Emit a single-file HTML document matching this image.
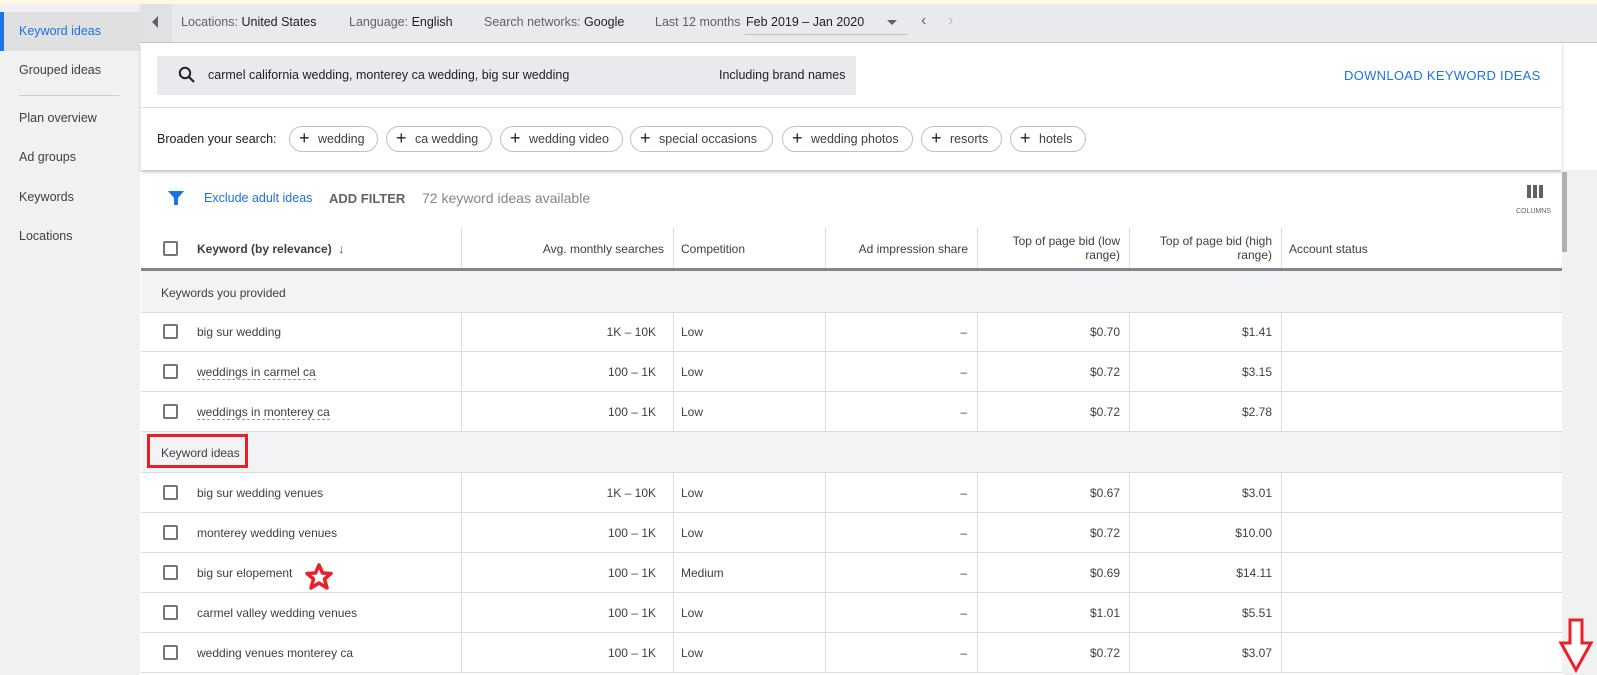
<!DOCTYPE html>
<html><head><meta charset="utf-8"><style>
*{box-sizing:border-box;margin:0;padding:0}
body{width:1597px;height:675px;overflow:hidden;background:#fff;font-family:"Liberation Sans",Arial,sans-serif;color:#3c4043;position:relative;font-size:12px}
.a{position:absolute}
.side{left:0;top:4px;width:140px;height:671px;background:#f1f1f1}
.side div{position:absolute;left:19px;font-size:12.5px;color:#3c4043}
.top{left:140px;top:4px;width:1457px;height:39px;background:#e8eaed;border-bottom:1px solid #c8c8c8}
.t{font-size:12.5px;color:#5f6368;top:11px}
.t b{font-weight:normal;color:#202124}
.chip{position:absolute;top:126px;height:26px;border:1px solid #bdc1c6;border-radius:13px;font-size:12.5px;color:#3c4043;line-height:24px;padding-left:28px}
.chip:before{content:"+";position:absolute;left:9px;top:-1px;font-size:18px;color:#202124}
.row{position:absolute;left:141px;width:1421px;height:40px;border-bottom:1px solid #dadce0;font-size:12px;color:#3c4043}
.row span{position:absolute;top:13px}
.cb{position:absolute;left:22px;top:12px;width:15px;height:15px;border:2px solid #757575;border-radius:2px}
.grp{background:#f1f3f4}
.vl{position:absolute;top:0;bottom:0;width:1px;background:#dadce0}
.r{text-align:right}
</style></head><body>
<div class="a" style="left:0;top:0;width:1597px;height:4px;background:#fdf8e4"></div>
<div class="a side">
<div style="left:0;top:8px;width:140px;height:39px;background:#e0e0e0;border-left:4px solid #1a73e8"></div>
<div style="top:20px;color:#1a73e8">Keyword ideas</div>
<div style="top:59px">Grouped ideas</div>
<div style="top:91px;width:100px;height:1px;background:#ccc"></div>
<div style="top:107px">Plan overview</div>
<div style="top:146px">Ad groups</div>
<div style="top:186px">Keywords</div>
<div style="top:225px">Locations</div>
</div>
<div class="a top">
<div class="a" style="left:0;top:0;width:32px;height:38px;background:#dfe1e5"></div>
<div class="a" style="left:12px;top:12px;width:0;height:0;border-top:6px solid transparent;border-bottom:6px solid transparent;border-right:6px solid #5f6368"></div>
<div class="a t" style="left:41px">Locations: <b>United States</b></div>
<div class="a t" style="left:209px">Language: <b>English</b></div>
<div class="a t" style="left:344px">Search networks: <b>Google</b></div>
<div class="a t" style="left:515px">Last 12 months</div>
<div class="a t" style="left:606px"><b>Feb 2019 – Jan 2020</b></div>
<div class="a" style="left:605px;top:30px;width:162px;height:1px;background:#c0c0c0"></div>
<div class="a" style="left:747px;top:16px;border-left:5px solid transparent;border-right:5px solid transparent;border-top:5px solid #5f6368"></div>
<div class="a" style="left:781px;top:8px;font-size:16px;color:#5f6368">‹</div>
<div class="a" style="left:808px;top:8px;font-size:16px;color:#bbb">›</div>
</div>
<div class="a" style="left:141px;top:43px;width:1421px;height:127px;background:#fff;box-shadow:0 2px 3px rgba(0,0,0,.25)"></div>
<div class="a" style="left:157px;top:56px;width:699px;height:39px;background:#e8eaed"></div>
<svg class="a" style="left:177px;top:65px" width="20" height="20" viewBox="0 0 20 20"><circle cx="8" cy="8" r="5.2" fill="none" stroke="#202124" stroke-width="2"/><path d="M12 12l5 5" stroke="#202124" stroke-width="2.2"/></svg>
<div class="a" style="left:208px;top:68px;font-size:12.5px;color:#202124">carmel california wedding, monterey ca wedding, big sur wedding</div>
<div class="a" style="left:719px;top:68px;font-size:12.5px;color:#202124">Including brand names</div>
<div class="a" style="left:1344px;top:68px;font-size:13px;color:#1a73e8;letter-spacing:.3px">DOWNLOAD KEYWORD IDEAS</div>
<div class="a" style="left:141px;top:107px;width:1421px;height:1px;background:#dadce0"></div>
<div class="a" style="left:157px;top:132px;font-size:12.5px;color:#202124">Broaden your search:</div>
<div class="chip" style="left:289px;width:89px">wedding</div>
<div class="chip" style="left:386px;width:106px">ca wedding</div>
<div class="chip" style="left:500px;width:123px">wedding video</div>
<div class="chip" style="left:630px;width:143px">special occasions</div>
<div class="chip" style="left:782px;width:131px">wedding photos</div>
<div class="chip" style="left:921px;width:81px">resorts</div>
<div class="chip" style="left:1010px;width:76px">hotels</div>
<div class="a" style="left:1562px;top:170px;width:35px;height:505px;background:#f1f1f1"></div>
<div class="a" style="left:1562px;top:172px;width:5px;height:80px;background:#b0b0b0"></div>
<svg class="a" style="left:167px;top:189px" width="18" height="18" viewBox="0 0 18 18"><path d="M1 2h16l-6 7v7h-4v-7z" fill="#1a73e8"/></svg>
<div class="a" style="left:204px;top:191px;font-size:12.5px;color:#1a73e8">Exclude adult ideas</div>
<div class="a" style="left:329px;top:191px;font-size:13px;color:#5f6368;font-weight:bold">ADD FILTER</div>
<div class="a" style="left:422px;top:190px;font-size:14px;color:#80868b">72 keyword ideas available</div>
<div class="a" style="left:1527px;top:185px;width:17px;height:13px;background:repeating-linear-gradient(90deg,#5f6368 0 4px,#fff 4px 6px)"></div>
<div class="a" style="left:1516px;top:208px;font-size:7px;color:#5f6368">COLUMNS</div>
<div class="row" style="top:227px;height:44px;border-bottom:3px solid #80868b;font-size:12px">
<div class="cb" style="top:14px"></div>
<span style="left:56px;top:15px;font-weight:bold;color:#3c4043">Keyword (by relevance) &nbsp;↓</span>
<div class="vl" style="left:320px"></div>
<span class="r" style="right:898px;top:15px">Avg. monthly searches</span>
<div class="vl" style="left:532px"></div>
<span style="left:540px;top:15px">Competition</span>
<div class="vl" style="left:684px"></div>
<span class="r" style="right:594px;top:15px">Ad impression share</span>
<div class="vl" style="left:836px"></div>
<span class="r" style="right:442px;top:7px;line-height:14px">Top of page bid (low<br>range)</span>
<div class="vl" style="left:988px"></div>
<span class="r" style="right:290px;top:7px;line-height:14px">Top of page bid (high<br>range)</span>
<div class="vl" style="left:1140px"></div>
<span style="left:1148px;top:15px">Account status</span>
</div>
<div class="row grp" style="top:271px;height:42px"><span style="left:20px;top:15px">Keywords you provided</span></div>
<div class="row grp" style="top:432px;height:41px"><span style="left:20px;top:14px">Keyword ideas</span>
<div class="a" style="left:6px;top:2px;width:101px;height:34px;border:3px solid #e8202a"></div></div>
<div id="rows"></div>
<svg class="a" style="left:304px;top:563px" width="30" height="28" viewBox="0 0 30 28"><path d="M15 2l3.5 8 8.5.5-6.5 5.5 2.5 9-8-5-8 5 2.5-9-6.5-5.5 8.5-.5z" fill="#fff" stroke="#e8202a" stroke-width="3.5" stroke-linejoin="round"/></svg>
<svg class="a" style="left:1558px;top:617px" width="36" height="58" viewBox="0 0 36 58"><path d="M12 3h12v23h9l-15 27-15-27h9z" fill="#fff" stroke="#e8202a" stroke-width="3"/></svg>
<script>
var d=[[312,"big sur wedding","1K – 10K","Low","$0.70","$1.41",0],[352,"weddings in carmel ca","100 – 1K","Low","$0.72","$3.15",1],[392,"weddings in monterey ca","100 – 1K","Low","$0.72","$2.78",1],[473,"big sur wedding venues","1K – 10K","Low","$0.67","$3.01",0],[513,"monterey wedding venues","100 – 1K","Low","$0.72","$10.00",0],[553,"big sur elopement","100 – 1K","Medium","$0.69","$14.11",0],[593,"carmel valley wedding venues","100 – 1K","Low","$1.01","$5.51",0],[633,"wedding venues monterey ca","100 – 1K","Low","$0.72","$3.07",0]];
var h="";d.forEach(function(r){h+='<div class="row" style="top:'+r[0]+'px"><div class="cb"></div><span style="left:56px;'+(r[6]?'border-bottom:1px dashed #999':'')+'">'+r[1]+'</span><div class="vl" style="left:320px"></div><span class="r" style="right:906px">'+r[2]+'</span><div class="vl" style="left:532px"></div><span style="left:540px">'+r[3]+'</span><div class="vl" style="left:684px"></div><span style="right:595px">–</span><div class="vl" style="left:836px"></div><span style="right:442px">'+r[4]+'</span><div class="vl" style="left:988px"></div><span style="right:290px">'+r[5]+'</span><div class="vl" style="left:1140px"></div></div>'});
document.getElementById("rows").outerHTML=h;
</script>
</body></html>
